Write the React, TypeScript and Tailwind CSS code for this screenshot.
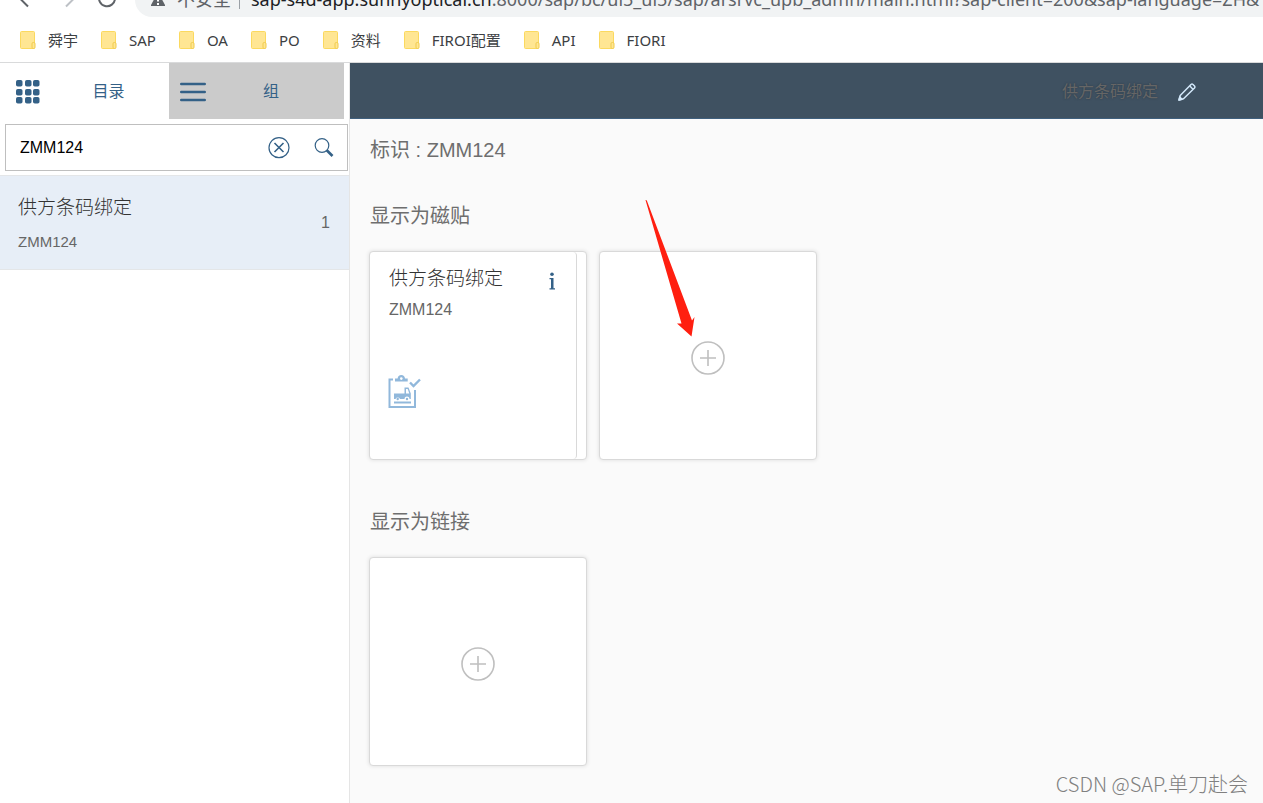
import type { ReactNode } from "react";

const bookmarks = ["舜宇", "SAP", "OA", "PO", "资料", "FIROI配置", "API", "FIORI"];

const FolderIcon = () => (
  <svg width="16" height="18" viewBox="0 0 16 18" className="shrink-0">
    <rect x="0.5" y="0.5" width="14" height="17" rx="1" fill="#ffe693" stroke="#fbd95f" />
    <rect x="12" y="11.5" width="3" height="6" rx="1.2" fill="#ffe693" stroke="#f0cb4d" />
  </svg>
);

const BrowserBar = () => (
  <div className="border-b border-[#d9dadb] bg-white font-['Noto_Sans','Noto_Sans_CJK_SC',sans-serif]">
    <div className="flex h-[17px] items-end overflow-hidden">
      <div className="flex h-[34px] w-[135px] shrink-0 items-center text-[#5f6368]">
        <svg width="135" height="34" viewBox="0 0 135 34" fill="none" stroke="currentColor" strokeWidth="2">
          <path d="M28 23.5 L19 14.5 L28 5.5" />
          <path d="M66 23.5 L75 14.5 L66 5.5" stroke="#bdc1c6" />
          <path d="M115 15.5 A8 8 0 1 1 112 9" />
        </svg>
      </div>
      <div className="flex h-[34px] min-w-0 flex-1 items-center overflow-hidden rounded-l-full bg-[#f1f3f4] pb-0.5 pl-4 text-lg whitespace-nowrap text-[#5f6368]">
        <svg width="14" height="16" viewBox="0 0 14 16" className="shrink-0" fill="#5f6368">
          <path d="M7 1 L14.500 15 H-0.500 Z" />
          <path d="M7 6 V10.500 M7 12 V14" stroke="#fff" strokeWidth="2" />
        </svg>
        <span className="ml-3">不安全</span>
        <span className="mr-[11px] ml-2 h-5 w-px shrink-0 bg-[#9aa0a6]" />
        <span>
          <span className="text-[#202124]">sap-s4d-app.sunnyoptical.cn</span>
          :8000/sap/bc/ui5_ui5/sap/arsrvc_upb_admn/main.html?sap-client=200&amp;sap-language=ZH&amp;
        </span>
      </div>
    </div>
    <nav className="flex h-[45px] items-center gap-[23px] pt-px pl-5 text-[15px] text-[#3c4043]">
      {bookmarks.map((name) => (
        <a key={name} href="#" className="flex items-center gap-3 whitespace-nowrap">
          <FolderIcon />
          {name}
        </a>
      ))}
    </nav>
  </div>
);

const GridIcon = () => (
  <svg width="24" height="24" viewBox="0 0 24 24" fill="#346187" className="shrink-0">
    {[0, 9, 17].map((y) =>
      [0, 9, 17].map((x) => <rect key={`${x}-${y}`} x={x} y={y} width="6.500" height="6.500" rx="1.800" />)
    )}
  </svg>
);

const ListIcon = () => (
  <svg width="26" height="20" viewBox="0 0 26 20" className="shrink-0" stroke="#346187" strokeWidth="2.600" strokeLinecap="round">
    <path d="M1.300 2 H24.700 M1.300 10 H24.700 M1.300 18 H24.700" />
  </svg>
);

const PencilIcon = () => (
  <svg width="18" height="18" viewBox="0 0 18 18" fill="none" stroke="#d3e8fa" strokeWidth="1.500" strokeLinejoin="round">
    <path d="M1 17 L2.200 12.500 L13 1.500 Q14 0.700 15 1.500 L16.500 3 Q17.300 4 16.500 5 L5.500 15.800 Z" />
    <path d="M11.800 3 L15 6.200" />
    <path d="M1 17 L1.800 14 L4 16.200 Z" fill="#d3e8fa" />
  </svg>
);

const TruckTaskIcon = () => (
  <svg width="34" height="34" viewBox="0 0 34 34" fill="none" stroke="#91b8db" strokeWidth="2">
    <path d="M5 4.500 H1.500 V32 H27 V15" />
    <path d="M7 6.500 V3.500 H9.600 Q10 0 13.300 0 T17 3.500 H19.700 V6.500 Z" fill="#91b8db" stroke="none" />
    <circle cx="13.300" cy="3.600" r="1.300" fill="#fff" stroke="none" />
    <path d="M22 7.500 L25.500 11 L32 4.500" strokeWidth="2.400" />
    <path d="M6 18.500 H16.500 V12.500 H20.500 L22.800 18.500 V24 H21.500 A2.500 2.500 0 0 0 16.500 24 H12 A2.500 2.500 0 0 0 7.500 24 H6 Z" fill="#91b8db" stroke="none" />
    <path d="M18 14 H19.700 L21.300 18.500 H18 Z" fill="#fff" stroke="none" />
    <circle cx="9.700" cy="24" r="1.200" fill="#91b8db" stroke="none" />
    <circle cx="19" cy="24" r="1.200" fill="#91b8db" stroke="none" />
    <path d="M6 27.500 H23" />
  </svg>
);

const Sidebar = () => (
  <aside className="w-[350px] shrink-0 border-r border-[#e5e5e5] bg-white">
    <div className="flex h-14 pr-[5px] text-base text-[#346187]">
      <button className="flex w-[169px] items-center pt-px pl-4">
        <GridIcon />
        <span className="ml-2 flex-1 text-center">目录</span>
      </button>
      <button className="flex flex-1 items-center bg-[#cbcbcb] pt-px pr-2 pl-[11px]">
        <ListIcon />
        <span className="flex-1 text-center">组</span>
      </button>
    </div>

    <form className="mt-[5px] mr-px ml-[5px] flex h-[47px] items-center border border-[#bfbfbf] pr-[13px] pl-[14px]">
      <input
        aria-label="搜索"
        defaultValue="ZMM124"
        className="min-w-0 flex-1 bg-transparent text-base text-black outline-none"
      />
      <button type="button" aria-label="清除" className="mr-6">
        <svg width="22" height="22" viewBox="0 0 22 22" fill="none" stroke="#346187" strokeWidth="1.200">
          <circle cx="11" cy="10.700" r="10" />
          <path d="M6.500 6 L15.500 15 M15.500 6 L6.500 15" strokeWidth="1.600" />
        </svg>
      </button>
      <button type="button" aria-label="查找">
        <svg width="20" height="20" viewBox="0 0 20 20" fill="none" stroke="#346187">
          <circle cx="8" cy="7.500" r="6.800" strokeWidth="1.200" />
          <path d="M12.500 12 L18.500 18" strokeWidth="2.600" />
        </svg>
      </button>
    </form>

    <div className="mt-1 flex h-[95px] items-center justify-between border-y border-[#e4e6e8] bg-[#e7eef7] pr-[19px] pl-[18px]">
      <div className="pt-0.5">
        <p className="text-[19px] leading-7 font-light text-[#333333]">供方条码绑定</p>
        <p className="mt-2 text-[15px] leading-6 text-[#666666]">ZMM124</p>
      </div>
      <span className="text-base text-[#666666]">1</span>
    </div>
  </aside>
);

const SectionTitle = ({ children }: { children: ReactNode }) => (
  <h2 className="mb-[21px] pl-px text-xl leading-7 text-[#6e6e6e]">{children}</h2>
);

const AddTile = () => (
  <button
    aria-label="添加"
    className="flex h-[209px] w-[218px] items-center justify-center rounded border border-[#d9d9d9] bg-white pt-[5px] shadow-[0_0_4px_rgba(0,0,0,0.12)]"
  >
    <svg width="34" height="34" viewBox="0 0 34 34" fill="none" stroke="#bfbfbf">
      <circle cx="17" cy="17" r="16" strokeWidth="1.600" />
      <path d="M17 9 V25 M9 17 H25" strokeWidth="1.600" />
    </svg>
  </button>
);

const AppTile = () => (
  <div className="h-[209px] w-[218px] rounded border border-[#d9d9d9] bg-white pr-[9px] shadow-[0_0_4px_rgba(0,0,0,0.12)]">
    <div className="flex h-full flex-col rounded border-r border-[#d9d9d9] px-[19px] pt-[13px] pb-[50px]">
      <div className="flex items-center justify-between">
        <h3 className="text-[19px] leading-7 font-light text-[#333333]">供方条码绑定</h3>
        <svg width="8" height="18" viewBox="0 0 8 18" fill="#346187" className="mt-1">
          <circle cx="3" cy="2.200" r="1.800" />
          <path d="M0.500 6 H4.500 V16.300 H6 V17.500 H0.500 V16.300 H2 V7.200 H0.500 Z" />
        </svg>
      </div>
      <p className="mt-[5px] text-base text-[#666666]">ZMM124</p>
      <div className="-ml-px mt-auto">
        <TruckTaskIcon />
      </div>
    </div>
  </div>
);

const App = () => {
  return (
    <div className="relative flex min-h-screen flex-col overflow-hidden bg-[#fafafa] font-['Liberation_Sans','Noto_Sans_CJK_SC',sans-serif]">
      <BrowserBar />
      <div className="flex flex-1">
        <Sidebar />
        <main className="min-w-0 flex-1">
          <header className="flex h-14 items-center justify-end gap-5 border-b border-[#3f5f7d] bg-[#3f5161] pt-0.5 pr-[67px]">
            <span className="text-base text-[#666666] [text-shadow:0_0_2px_#2b3a47]">供方条码绑定</span>
            <button aria-label="编辑">
              <PencilIcon />
            </button>
          </header>

          <div className="px-[19px] pt-[17px] pb-9">
            <h1 className="mb-[38px] pl-px text-xl leading-7 text-[#6e6e6e]">标识 : ZMM124</h1>

            <SectionTitle>显示为磁贴</SectionTitle>
            <div className="mb-12 flex flex-wrap gap-3">
              <AppTile />
              <div className="relative">
                <AddTile />
                {/* arrow pointing at the add button */}
                <svg
                  width="60"
                  height="140"
                  viewBox="0 0 60 140"
                  fill="#ff1f10"
                  className="pointer-events-none absolute -top-[52px] left-[45px]"
                >
                  <path d="M1.500 1 Q2.500 0.500 3 2 L48 121.500 L50.500 118 L47.500 137.500 L33 124.500 L37.500 124.500 Z" />
                </svg>
              </div>
            </div>

            <SectionTitle>显示为链接</SectionTitle>
            <AddTile />
          </div>
        </main>
      </div>
      <span className="absolute right-[15px] bottom-[5px] font-['Noto_Sans_CJK_SC',sans-serif] text-xl leading-7 font-light text-[#808080]">
        CSDN @SAP.单刀赴会
      </span>
    </div>
  );
};

export default App;
